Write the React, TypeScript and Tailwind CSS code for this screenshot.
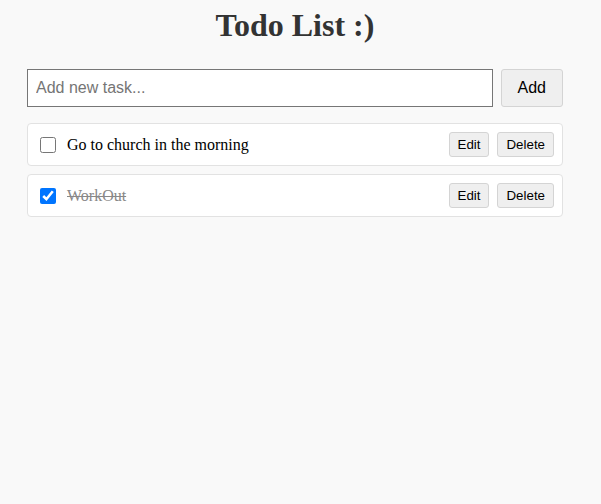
import React, { useState } from 'react';

interface Todo {
  id: number;
  text: string;
  done: boolean;
}

const initialTodos: Todo[] = [
  { id: 1, text: 'Go to church in the morning', done: false },
  { id: 2, text: 'WorkOut', done: true },
];

export default function App() {
  const [todos, setTodos] = useState<Todo[]>(initialTodos);
  const [task, setTask] = useState('');

  const toggle = (id: number) =>
    setTodos(todos.map((t) => (t.id === id ? { ...t, done: !t.done } : t)));

  return (
    <div className="min-h-[504px] bg-[#f9f9f9] pt-[7px]">
      <div className="ml-[27px] w-[536px]">
        <h1 className="text-center text-[32px] leading-[36px] font-bold text-[#333] font-['Liberation_Serif',serif]">
          Todo List :)
        </h1>

        <div className="mt-[26px] flex gap-2 font-['Liberation_Sans',Arial,sans-serif]">
          <input
            value={task}
            onChange={(e) => setTask(e.target.value)}
            placeholder="Add new task..."
            className="h-[38px] flex-1 border border-[#767676] bg-white px-2 text-base text-black placeholder:text-[#757575] outline-none"
          />
          <button className="h-[38px] rounded-[3px] border border-[#d4d4d4] bg-[#efefef] px-4 text-base text-black">
            Add
          </button>
        </div>

        <ul className="mt-4 flex flex-col gap-2">
          {todos.map((todo) => (
            <li
              key={todo.id}
              className="flex h-[43px] items-center rounded border border-[#e2e2e2] bg-white pl-3 pr-2"
            >
              <input
                type="checkbox"
                checked={todo.done}
                onChange={() => toggle(todo.id)}
                className="m-0 h-4 w-4 accent-[#0075ff]"
              />
              <span
                className={`ml-[11px] flex-1 text-base font-['Liberation_Serif',serif] ${
                  todo.done ? 'text-[#888] line-through' : 'text-black'
                }`}
              >
                {todo.text}
              </span>
              <div className="flex gap-2 font-['Liberation_Sans',Arial,sans-serif]">
                <button className="h-[25px] rounded-[3px] border border-[#d4d4d4] bg-[#efefef] px-2 text-[13.33px] text-black">
                  Edit
                </button>
                <button className="h-[25px] rounded-[3px] border border-[#d4d4d4] bg-[#efefef] px-2 text-[13.33px] text-black">
                  Delete
                </button>
              </div>
            </li>
          ))}
        </ul>
      </div>
    </div>
  );
}
